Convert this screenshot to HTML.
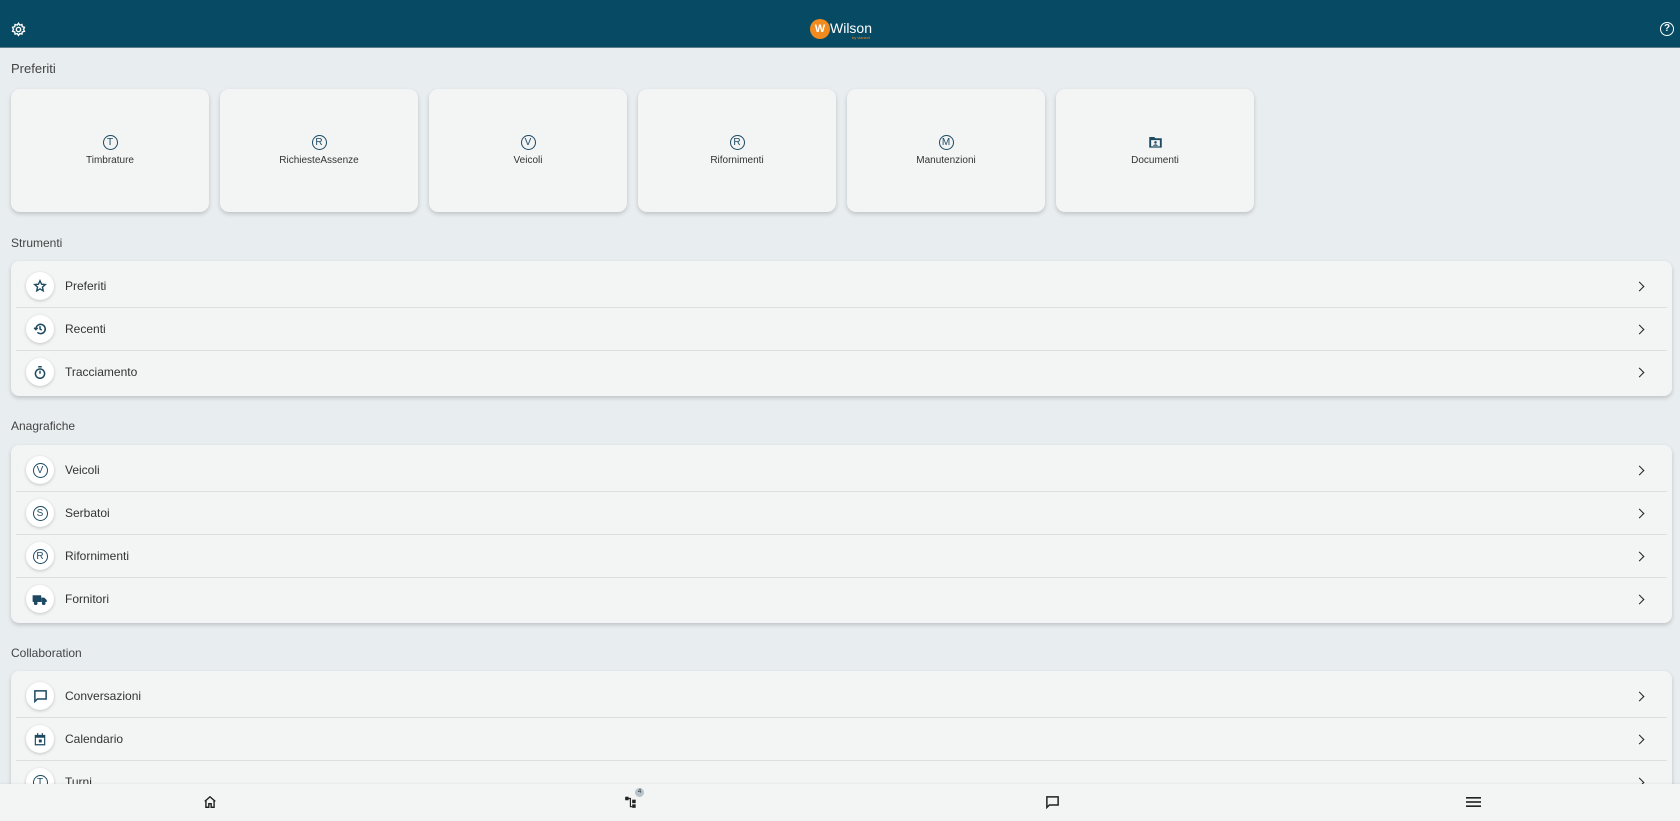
<!DOCTYPE html>
<html><head><meta charset="utf-8"><style>
*{box-sizing:border-box;margin:0;padding:0}
body{width:1680px;height:821px;overflow:hidden;background:#e8edf0;font-family:"Liberation Sans",sans-serif;color:#333;position:relative}
.hdr{position:absolute;left:0;top:0;width:1680px;height:48px;background:#074a63;border-bottom:1px solid #5a7e8c}
.lbl{position:absolute;left:11px;font-size:12px;color:#444}
.card{position:absolute;top:89px;width:198px;height:123px;background:#f3f4f4;border-radius:9px;box-shadow:0 2px 4px rgba(0,0,0,.18);text-align:center}
.card .ic{margin-top:46px;height:18px;display:flex;justify-content:center}
.card .t{font-size:10px;margin-top:2px;color:#333}
.circ{display:inline-flex;align-items:center;justify-content:center;width:15px;height:15px;border:1.3px solid #1d4a62;border-radius:50%;font-size:10px;color:#1d4a62}
.list{position:absolute;left:11px;width:1661px;background:#f3f4f4;border-radius:8px;box-shadow:0 2px 4px rgba(0,0,0,.18);padding:4px 0 2px}
.row{height:43px;position:relative;border-bottom:1px solid #dcdfe0;margin:0 5px}
.row:last-child{border-bottom:none}
.row .b{position:absolute;left:10px;top:7px;width:28px;height:28px;border-radius:50%;background:#fff;box-shadow:0 1px 3px rgba(0,0,0,.2);display:flex;align-items:center;justify-content:center}
.row .n{position:absolute;left:49px;top:14px;font-size:12px;color:#333}
.row .c{position:absolute;right:24px;top:18px;width:7px;height:7px;border-right:1.6px solid #222;border-top:1.6px solid #222;transform:rotate(45deg)}
.nav{position:absolute;left:0;top:784px;width:1680px;height:37px;background:#f3f5f5;box-shadow:0 -1px 2px rgba(0,0,0,.05)}
</style></head><body>
<div class="hdr">
<svg style="position:absolute;left:11px;top:22px" width="15" height="15" viewBox="0 0 24 24" fill="none" stroke="#fff" stroke-width="2.2"><circle cx="12" cy="12" r="3.5"/><path d="M12 2l2 3 3.5-1 .5 3.5 3.5 1-1.5 3.2 1.5 3.2-3.5 1-.5 3.5-3.5-1-2 3-2-3-3.5 1-.5-3.5-3.5-1 1.5-3.2L2.5 8.5 6 7.5 6.5 4 10 5z"/></svg>
<div style="position:absolute;left:810px;top:19px;width:20px;height:20px;border-radius:50%;background:#f18a1f;color:#fff;font-size:11px;font-weight:bold;text-align:center;line-height:20px">W</div>
<div style="position:absolute;left:830px;top:20px;color:#fff;font-size:14px">Wilson</div>
<div style="position:absolute;left:852px;top:35px;color:#f18a1f;font-size:4px">by vianext</div>
<div style="position:absolute;left:1660px;top:22px;width:14px;height:14px;border:1.6px solid #fff;border-radius:50%;color:#fff;font-size:10px;font-weight:bold;text-align:center;line-height:11px">?</div>
</div>
<div class="lbl" style="top:61px;font-size:13px">Preferiti</div>
<div class="card" style="left:11px"><div class="ic"><span class="circ">T</span></div><div class="t">Timbrature</div></div>
<div class="card" style="left:220px"><div class="ic"><span class="circ">R</span></div><div class="t">RichiesteAssenze</div></div>
<div class="card" style="left:429px"><div class="ic"><span class="circ">V</span></div><div class="t">Veicoli</div></div>
<div class="card" style="left:638px"><div class="ic"><span class="circ">R</span></div><div class="t">Rifornimenti</div></div>
<div class="card" style="left:847px"><div class="ic"><span class="circ">M</span></div><div class="t">Manutenzioni</div></div>
<div class="card" style="left:1056px"><div class="ic"><svg width="15" height="14" viewBox="0 0 24 22"><path d="M2 3h8l2 2h10v15H2z" fill="#1d4a62"/><rect x="5" y="8" width="14" height="10" fill="#f3f4f4"/><circle cx="12" cy="11.5" r="2" fill="#1d4a62"/><path d="M8 17c1-3 7-3 8 0z" fill="#1d4a62"/></svg></div><div class="t">Documenti</div></div>

<div class="lbl" style="top:236px">Strumenti</div>
<div class="list" style="top:261px">
<div class="row"><div class="b"><svg width="14" height="14" viewBox="0 0 24 24" fill="none" stroke="#1d4a62" stroke-width="2.4"><path d="M12 3l2.7 6 6.3.6-4.8 4.3 1.4 6.4L12 17l-5.6 3.3 1.4-6.4L3 9.6 9.3 9z"/></svg></div><div class="n">Preferiti</div><div class="c"></div></div>
<div class="row"><div class="b"><svg width="14" height="14" viewBox="0 0 24 24" fill="none" stroke="#1d4a62" stroke-width="2.6"><path d="M5 12a8 8 0 1 1 2.5 5.8"/><path d="M2 10l3 3 3-3"/><path d="M12 7v5l3 2"/></svg></div><div class="n">Recenti</div><div class="c"></div></div>
<div class="row"><div class="b"><svg width="14" height="15" viewBox="0 0 24 26" fill="none" stroke="#1d4a62" stroke-width="2.6"><circle cx="12" cy="15" r="8"/><path d="M9 3h6M12 15V10"/></svg></div><div class="n">Tracciamento</div><div class="c"></div></div>
</div>

<div class="lbl" style="top:419px">Anagrafiche</div>
<div class="list" style="top:445px">
<div class="row"><div class="b"><span class="circ">V</span></div><div class="n">Veicoli</div><div class="c"></div></div>
<div class="row"><div class="b"><span class="circ">S</span></div><div class="n">Serbatoi</div><div class="c"></div></div>
<div class="row"><div class="b"><span class="circ">R</span></div><div class="n">Rifornimenti</div><div class="c"></div></div>
<div class="row"><div class="b"><svg width="16" height="13" viewBox="0 0 26 20" fill="#1d4a62"><rect x="1" y="3" width="14" height="11" rx="1"/><path d="M15 7h5l4 4v3h-9z"/><circle cx="6" cy="16" r="3"/><circle cx="19" cy="16" r="3"/></svg></div><div class="n">Fornitori</div><div class="c"></div></div>
</div>

<div class="lbl" style="top:646px">Collaboration</div>
<div class="list" style="top:671px">
<div class="row"><div class="b"><svg width="15" height="15" viewBox="0 0 24 24" fill="none" stroke="#1d4a62" stroke-width="2.4"><path d="M3 3h18v13H7l-4 4z"/></svg></div><div class="n">Conversazioni</div><div class="c"></div></div>
<div class="row"><div class="b"><svg width="14" height="15" viewBox="0 0 24 24" fill="#1d4a62"><path d="M3 4h18v18H3zM5 9v11h14V9z"/><rect x="7" y="1" width="2" height="5"/><rect x="15" y="1" width="2" height="5"/><rect x="10" y="12" width="5" height="5"/></svg></div><div class="n">Calendario</div><div class="c"></div></div>
<div class="row"><div class="b"><span class="circ">T</span></div><div class="n">Turni</div><div class="c"></div></div>
</div>

<div class="nav">
<svg style="position:absolute;left:203px;top:11px" width="14" height="14" viewBox="0 0 24 24" fill="none" stroke="#222" stroke-width="2.4"><path d="M3 11l9-8 9 8M5 9v12h5v-6h4v6h5V9"/></svg>
<svg style="position:absolute;left:624px;top:11px" width="14" height="14" viewBox="0 0 24 24" fill="#222"><rect x="2" y="3" width="6" height="6"/><rect x="14" y="8" width="6" height="6"/><rect x="14" y="16" width="6" height="6"/><path d="M8 5h4v14h2v2h-4V7H8z"/></svg>
<div style="position:absolute;left:635px;top:4px;width:9px;height:9px;border-radius:50%;background:#b7c3c9;font-size:6px;text-align:center;line-height:9px;color:#333">4</div>
<svg style="position:absolute;left:1045px;top:11px" width="15" height="15" viewBox="0 0 24 24" fill="none" stroke="#222" stroke-width="2.4"><path d="M3 3h18v13H7l-4 4z"/></svg>
<svg style="position:absolute;left:1466px;top:12px" width="15" height="12" viewBox="0 0 24 18" fill="#222"><rect y="1" width="24" height="2.6"/><rect y="7.7" width="24" height="2.6"/><rect y="14.4" width="24" height="2.6"/></svg>
</div>
</body></html>
